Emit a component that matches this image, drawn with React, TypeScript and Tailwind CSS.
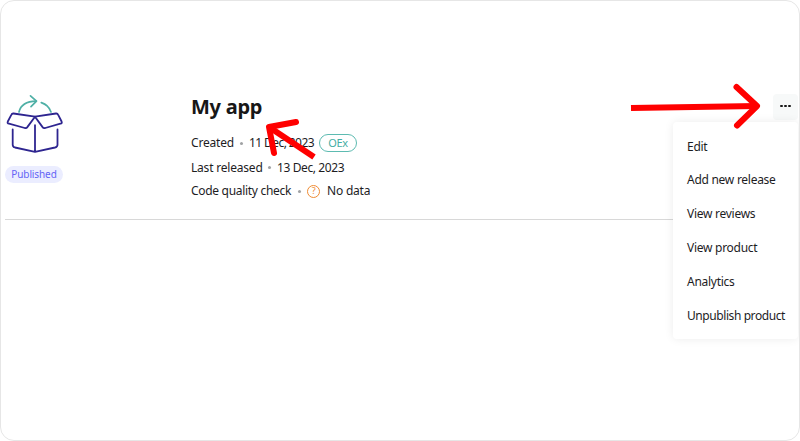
import React from "react";

type ItemProps = { label: string; className: string };

function Label({ label, className }: ItemProps) {
  return <span className={`${className} shrink-0 whitespace-nowrap`}>{label}</span>;
}

function Dot() {
  return (
    <span className="flex w-4 shrink-0 items-center justify-center">
      <span className="size-[3px] rounded-full bg-[#a0a2a4]" />
    </span>
  );
}

function BoxLogo() {
  return (
    <svg className="h-[60px] w-[60px]" viewBox="0 0 60 60" fill="none" strokeLinecap="round" strokeLinejoin="round">
      <g stroke="#4fb0a6" strokeWidth="1.7">
        <path d="M14 18C15.5 11.5 21 7.3 31.2 7.1" />
        <path d="M25.5 1.8L31.5 7.1L26 12.6" />
        <path d="M36.3 8.6C41 10.1 44.5 13.5 46 18" />
      </g>
      <g stroke="#2e2590" strokeWidth="1.8">
        <path d="M30 22.7L8.5 19.5Q7 19.3 6.3 20.8L2.8 27.5Q2 29.3 4 29.7L19.8 34Q21.5 34.4 22.5 32.9L30 22.7Z" />
        <path d="M30 22.7L51 19.5Q52.5 19.3 53.2 20.8L56.6 27.5Q57.4 29.3 55.4 29.7L40.2 34Q38.4 34.4 37.4 32.9L30 22.7Z" />
        <path d="M30 31.2V57.8M7.7 35.5V50.7Q7.7 52.9 10 53.5L30 57.8L50 53.5Q52.5 52.9 52.5 50.7V35.5" />
      </g>
    </svg>
  );
}

const menuItems = ["Edit", "Add new release", "View reviews", "View product", "Analytics", "Unpublish product"];

export default function App() {
  return (
    <div className="relative flex h-[441px] w-[800px] flex-col overflow-hidden rounded-[14px] border border-[#e6e6e6] bg-white font-['Noto_Sans',sans-serif] text-[12px] tracking-[-0.2px] text-[#1d1d1f]">
      <header className="ml-1 flex h-[219px] w-[793px] border-b border-[#d8d8d8] pt-[93px]">
        <div className="flex w-[186px] flex-col items-start">
          <BoxLogo />
          <span className="mt-[12px] flex h-[17px] w-[58px] items-center justify-center rounded-full bg-[#ebedff] text-[10px] tracking-[-0.1px] text-[#6464f5]">
            Published
          </span>
        </div>
        <div className="flex grow flex-col">
          <h1 className="flex h-[26px] items-center text-[20px] font-bold tracking-[-0.25px] text-[#171717]">My app</h1>
          <div className="mt-[11px] flex h-6 items-center">
            <Label label="Created" className="w-[42px]" />
            <Dot />
            <Label label="11 Dec, 2023" className="w-[70px] tracking-[-0.58px]" />
            <span className="flex h-[18px] w-[38px] items-center justify-center rounded-full border border-[#5dbbb1] text-[11px] tracking-[-0.35px] text-[#45aea4]">
              OEx
            </span>
          </div>
          <div className="flex h-6 items-center pt-px">
            <Label label="Last released" className="w-[70px]" />
            <Dot />
            <Label label="13 Dec, 2023" className="w-[70px] tracking-[-0.4px]" />
          </div>
          <div className="flex h-6 items-center">
            <Label label="Code quality check" className="w-[100px] tracking-[-0.3px]" />
            <Dot />
            <span className="mr-[7px] flex size-[13px] items-center justify-center rounded-full border border-[#ef8b32] text-[9px] text-[#ef8b32]">
              ?
            </span>
            <span>No data</span>
          </div>
        </div>
        <button className="flex h-[26px] w-[25px] items-center justify-center gap-[1.5px] rounded bg-[#f7f9f9] pb-[2px]">
          <span className="size-[2.5px] rounded-full bg-[#171717]" />
          <span className="size-[2.5px] rounded-full bg-[#171717]" />
          <span className="size-[2.5px] rounded-full bg-[#171717]" />
        </button>
      </header>

      <nav className="absolute left-[672px] top-[121px] flex h-[217px] w-[125px] flex-col rounded bg-white pl-[14px] pt-[7.6px] shadow-[0_0_10px_rgba(0,0,0,0.08)]">
        {menuItems.map((item) => (
          <div
            key={item}
            className={`flex h-[33.9px] items-center whitespace-nowrap ${item === "Unpublish product" ? "tracking-[-0.42px]" : "tracking-[-0.27px]"}`}
          >
            {item}
          </div>
        ))}
      </nav>

      <svg className="absolute -left-px -top-px h-[441px] w-[800px]" viewBox="0 0 800 441" fill="none" stroke="#ff0000" strokeLinecap="round" strokeLinejoin="round">
        <path d="M631 108L757 106" strokeWidth="6" strokeLinecap="butt" />
        <path d="M736.5 87L757 106L737 125.5" strokeWidth="6" />
        <path d="M314 157L269 127" strokeWidth="6" strokeLinecap="butt" />
        <path d="M296 122L269 127L274 153" strokeWidth="6" />
      </svg>
    </div>
  );
}
